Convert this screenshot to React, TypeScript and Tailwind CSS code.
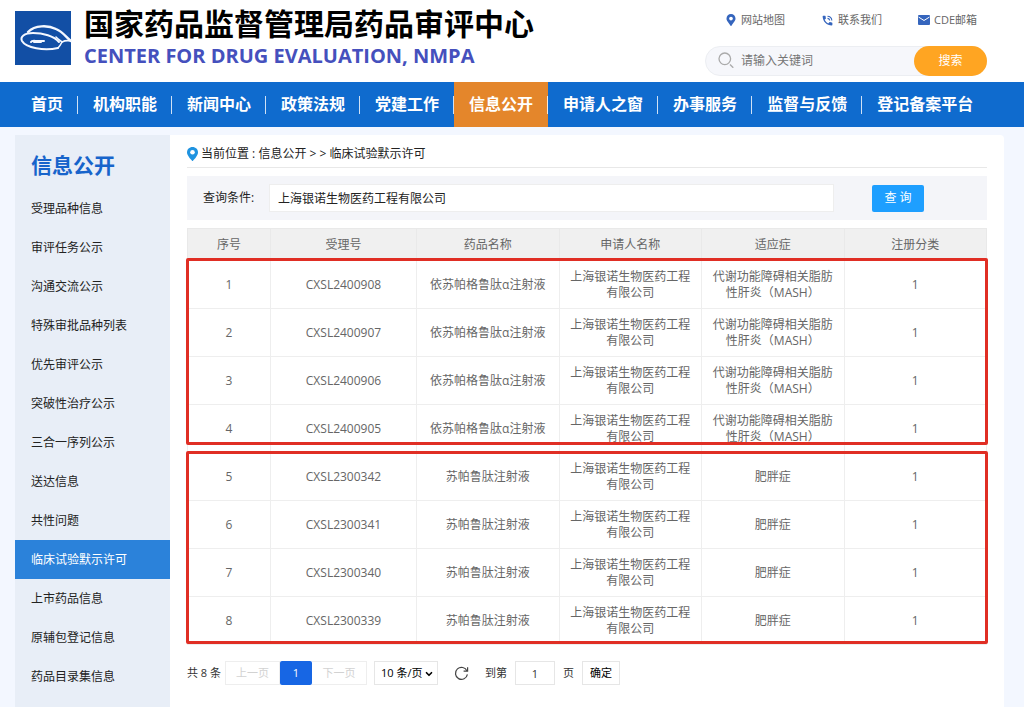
import { useState } from "react";
import { FaMapMarkerAlt } from "react-icons/fa";
import { MdPhoneInTalk } from "react-icons/md";
import { ChevronDown } from "lucide-react";
import clsx from "clsx";

interface Row {
  no: string;
  drug: string;
  indication: string;
}

const NAV = [
  "首页",
  "机构职能",
  "新闻中心",
  "政策法规",
  "党建工作",
  "信息公开",
  "申请人之窗",
  "办事服务",
  "监督与反馈",
  "登记备案平台",
];

const SIDE = [
  "受理品种信息",
  "审评任务公示",
  "沟通交流公示",
  "特殊审批品种列表",
  "优先审评公示",
  "突破性治疗公示",
  "三合一序列公示",
  "送达信息",
  "共性问题",
  "临床试验默示许可",
  "上市药品信息",
  "原辅包登记信息",
  "药品目录集信息",
];

const COMPANY = "上海银诺生物医药工程有限公司";
const MASH = "代谢功能障碍相关脂肪性肝炎（MASH）";

const ROWS: Row[] = [
  { no: "CXSL2400908", drug: "依苏帕格鲁肽α注射液", indication: MASH },
  { no: "CXSL2400907", drug: "依苏帕格鲁肽α注射液", indication: MASH },
  { no: "CXSL2400906", drug: "依苏帕格鲁肽α注射液", indication: MASH },
  { no: "CXSL2400905", drug: "依苏帕格鲁肽α注射液", indication: MASH },
  { no: "CXSL2300342", drug: "苏帕鲁肽注射液", indication: "肥胖症" },
  { no: "CXSL2300341", drug: "苏帕鲁肽注射液", indication: "肥胖症" },
  { no: "CXSL2300340", drug: "苏帕鲁肽注射液", indication: "肥胖症" },
  { no: "CXSL2300339", drug: "苏帕鲁肽注射液", indication: "肥胖症" },
];

export default function App() {
  return (
    <div className="flex min-h-screen flex-col bg-[#f3f7ff] font-['Open_Sans','Noto_Sans_CJK_SC',sans-serif] text-xs text-[#222]">
      <Header />
      <TopNav />
      <div className="mt-2 mr-5 ml-[15px] flex flex-1 rounded-t bg-white">
        <Sidebar />
        <main className="min-w-0 flex-1 px-[17px]">
          <div className="flex h-[33px] items-center gap-[3px] border-b border-[#e8e8e8] pt-[6px]">
            <PinIcon />
            <span>当前位置 : 信息公开 &gt; &gt; 临床试验默示许可</span>
          </div>
          <QueryBar />
          <ResultTable />
          <Pager />
        </main>
      </div>
    </div>
  );
}

function Header() {
  return (
    <header className="flex h-[82px] justify-between bg-white pr-[37px] pl-[15px]">
      <div className="flex gap-[13px]">
        <Logo />
        <div className="pt-1">
          <h1 className="text-[30px] leading-10 font-bold text-black">国家药品监督管理局药品审评中心</h1>
          <p className="text-xl leading-6 font-bold text-[#4550bd]">CENTER FOR DRUG EVALUATION, NMPA</p>
        </div>
      </div>
      <div className="flex flex-col gap-[18px] pt-3">
        <div className="flex h-4 items-center justify-end gap-9 pr-[10px] text-[11px] text-[#666]">
          <a href="#" className="flex items-center gap-1">
            <FaMapMarkerAlt className="size-3 text-[#3565bd]" />
            网站地图
          </a>
          <a href="#" className="flex items-center gap-1">
            <MdPhoneInTalk className="size-[13px] text-[#3565bd]" />
            联系我们
          </a>
          <a href="#" className="flex items-center gap-1">
            <svg viewBox="0 0 12 10" className="h-[10px] w-3">
              <rect width="12" height="10" rx="1" fill="#3565bd" />
              <path d="M0.5 2L6 5.5L11.5 2" fill="none" stroke="#fff" strokeWidth="1" />
            </svg>
            CDE邮箱
          </a>
        </div>
        <form className="flex h-[30px] w-[282px] rounded-full border border-[#eceef2] bg-[#f6f7fb]" onSubmit={(e) => e.preventDefault()}>
          <svg viewBox="0 0 16 16" className="mt-[5px] ml-3 size-4 shrink-0" fill="none" stroke="#aaa" strokeWidth="1.3">
            <circle cx="6.8" cy="6.8" r="5.8" />
            <path d="M12 12.5L15.3 15.8" />
          </svg>
          <input
            aria-label="关键词"
            placeholder="请输入关键词"
            className="min-w-0 flex-1 px-[7px] text-xs outline-none placeholder:text-[#757575]"
          />
          <button className="-my-px -mr-px w-[73px] rounded-full bg-[#ffa522] text-xs text-white">搜索</button>
        </form>
      </div>
    </header>
  );
}

function Logo() {
  return (
    <svg viewBox="0 0 56 54" className="mt-[11px] h-[54px] w-14 overflow-visible">
      <rect width="56" height="54" fill="#124fa5" />
      <g fill="none" stroke="#f4f8ff" strokeLinecap="round" strokeLinejoin="round">
        <path d="M13 21C20 14 33 14 41 18C48 21 51 26 56 30" strokeWidth="2.4" />
        <path d="M44 31C39 25 28 22 18 22C9 22 5 26 7 30C11 37 29 40 43 37" strokeWidth="2" />
        <path d="M56 30C51 29 49 30 47 31C46 33 45 35 43 37" strokeWidth="1.6" />
        <path d="M41 26C43 28 46 30 47 31" strokeWidth="1.6" />
        <path d="M16 31C17 29 20 30 22 30H29M19 31H26" strokeWidth="2" />
      </g>
    </svg>
  );
}

function TopNav() {
  return (
    <nav className="flex h-[45px] items-center bg-[#0f6bce] pl-4 text-base font-bold text-white">
      {NAV.map((item, i) => (
        <a
          key={item}
          href="#"
          className={clsx(
            "flex h-full shrink-0 items-center",
            item === "信息公开" && "bg-[#e4862b]",
          )}
        >
          <span className="px-[15px] pb-px">{item}</span>
          {i < NAV.length - 1 && <i className="-ml-px h-[18px] w-px bg-white/80" />}
        </a>
      ))}
    </nav>
  );
}

function Sidebar() {
  return (
    <aside className="w-[155px] shrink-0 bg-[#e8eef7] pt-3">
      <h2 className="px-4 text-[21px] leading-9 font-bold text-[#1764cb]">信息公开</h2>
      <ul className="pt-[6px]">
        {SIDE.map((item) => (
          <li key={item}>
            <a
              href="#"
              className={clsx(
                "flex h-[39px] items-center px-4",
                item === "临床试验默示许可" && "bg-[#2b82da] text-white",
              )}
            >
              {item}
            </a>
          </li>
        ))}
      </ul>
    </aside>
  );
}

function PinIcon() {
  return (
    <svg viewBox="0 0 11 14" className="h-[14px] w-[11px]">
      <path d="M5.5 0C2.3 0 0 2.4 0 5.4C0 9 5.5 14 5.5 14S11 9 11 5.4C11 2.4 8.7 0 5.5 0Z" fill="#1f93e0" />
      <circle cx="5.5" cy="5.3" r="2.3" fill="#fff" />
    </svg>
  );
}

function QueryBar() {
  const [value, setValue] = useState(COMPANY);
  return (
    <form className="mt-2 flex h-11 items-center bg-[#f4f5f9] px-4" onSubmit={(e) => e.preventDefault()}>
      <label htmlFor="cond" className="w-[66px] shrink-0">查询条件:</label>
      <input
        id="cond"
        value={value}
        onChange={(e) => setValue(e.target.value)}
        className="h-7 min-w-0 flex-1 border border-[#eee] bg-white px-2 outline-none"
      />
      <button className="mr-[47px] ml-[38px] h-[27px] w-[52px] rounded-xs bg-[#1e9fff] text-white">查 询</button>
    </form>
  );
}

function ResultTable() {
  return (
    <div className="relative mt-2">
      <table className="w-full table-fixed border-collapse text-center leading-4 text-[#666]">
        <colgroup>
          <col className="w-[83px]" />
          <col className="w-[146px]" />
          <col />
          <col />
          <col />
          <col />
        </colgroup>
        <thead>
          <tr className="h-8 bg-[#f0f0f0]">
            {["序号", "受理号", "药品名称", "申请人名称", "适应症", "注册分类"].map((h) => (
              <th key={h} className="border border-[#e9e9e9] font-normal">{h}</th>
            ))}
          </tr>
        </thead>
        <tbody>
          {ROWS.map((r, i) => (
            <tr key={r.no} className="h-12">
              <td className="border border-[#eee]">{i + 1}</td>
              <td className="border border-[#eee]">{r.no}</td>
              <td className="border border-[#eee] px-2">{r.drug}</td>
              <td className="border border-[#eee] px-2">{COMPANY}</td>
              <td className="border border-[#eee] px-2">{r.indication}</td>
              <td className="border border-[#eee]">1</td>
            </tr>
          ))}
        </tbody>
      </table>
      {/* highlight frames: the MASH filings, then the obesity filings */}
      <div className="pointer-events-none absolute -inset-x-px top-[30px] h-[187px] rounded-xs border-3 border-[#e02e24]" />
      <div className="pointer-events-none absolute -inset-x-px top-[223px] h-[193px] rounded-xs border-3 border-[#e02e24]" />
    </div>
  );
}

function Pager() {
  return (
    <div className="mt-4 flex h-6 items-center text-[11px] text-[#333]">
      <span className="w-[38px]">共 8 条</span>
      <button disabled className="h-full w-[55px] border border-[#eee] text-[#d2d2d2]">上一页</button>
      <button className="h-full w-8 rounded-xs bg-[#1766e4] text-white">1</button>
      <button disabled className="h-full w-[55px] border border-l-0 border-[#eee] text-[#d2d2d2]">下一页</button>
      <div className="relative ml-[7px] h-full">
        <select aria-label="每页条数" className="h-full w-16 appearance-none border border-[#e6e6e6] bg-white pl-[6px] text-black outline-none">
          <option>10 条/页</option>
        </select>
        <ChevronDown className="pointer-events-none absolute top-2 right-1 size-[10px] text-black" strokeWidth={4} />
      </div>
      <button aria-label="刷新" className="mx-4">
        <svg viewBox="0 0 15 15" className="size-[15px]" fill="none" stroke="#444" strokeWidth="1.2">
          <path d="M13 5A6 6 0 1 0 13.4 8.4" />
          <path d="M13.6 1.2V5.2H9.6" />
        </svg>
      </button>
      <label htmlFor="page" className="mr-2">到第</label>
      <input id="page" defaultValue="1" className="h-full w-10 border border-[#e6e6e6] text-center outline-none" />
      <span className="mx-2">页</span>
      <button className="h-full w-[38px] border border-[#e6e6e6] text-black">确定</button>
    </div>
  );
}
